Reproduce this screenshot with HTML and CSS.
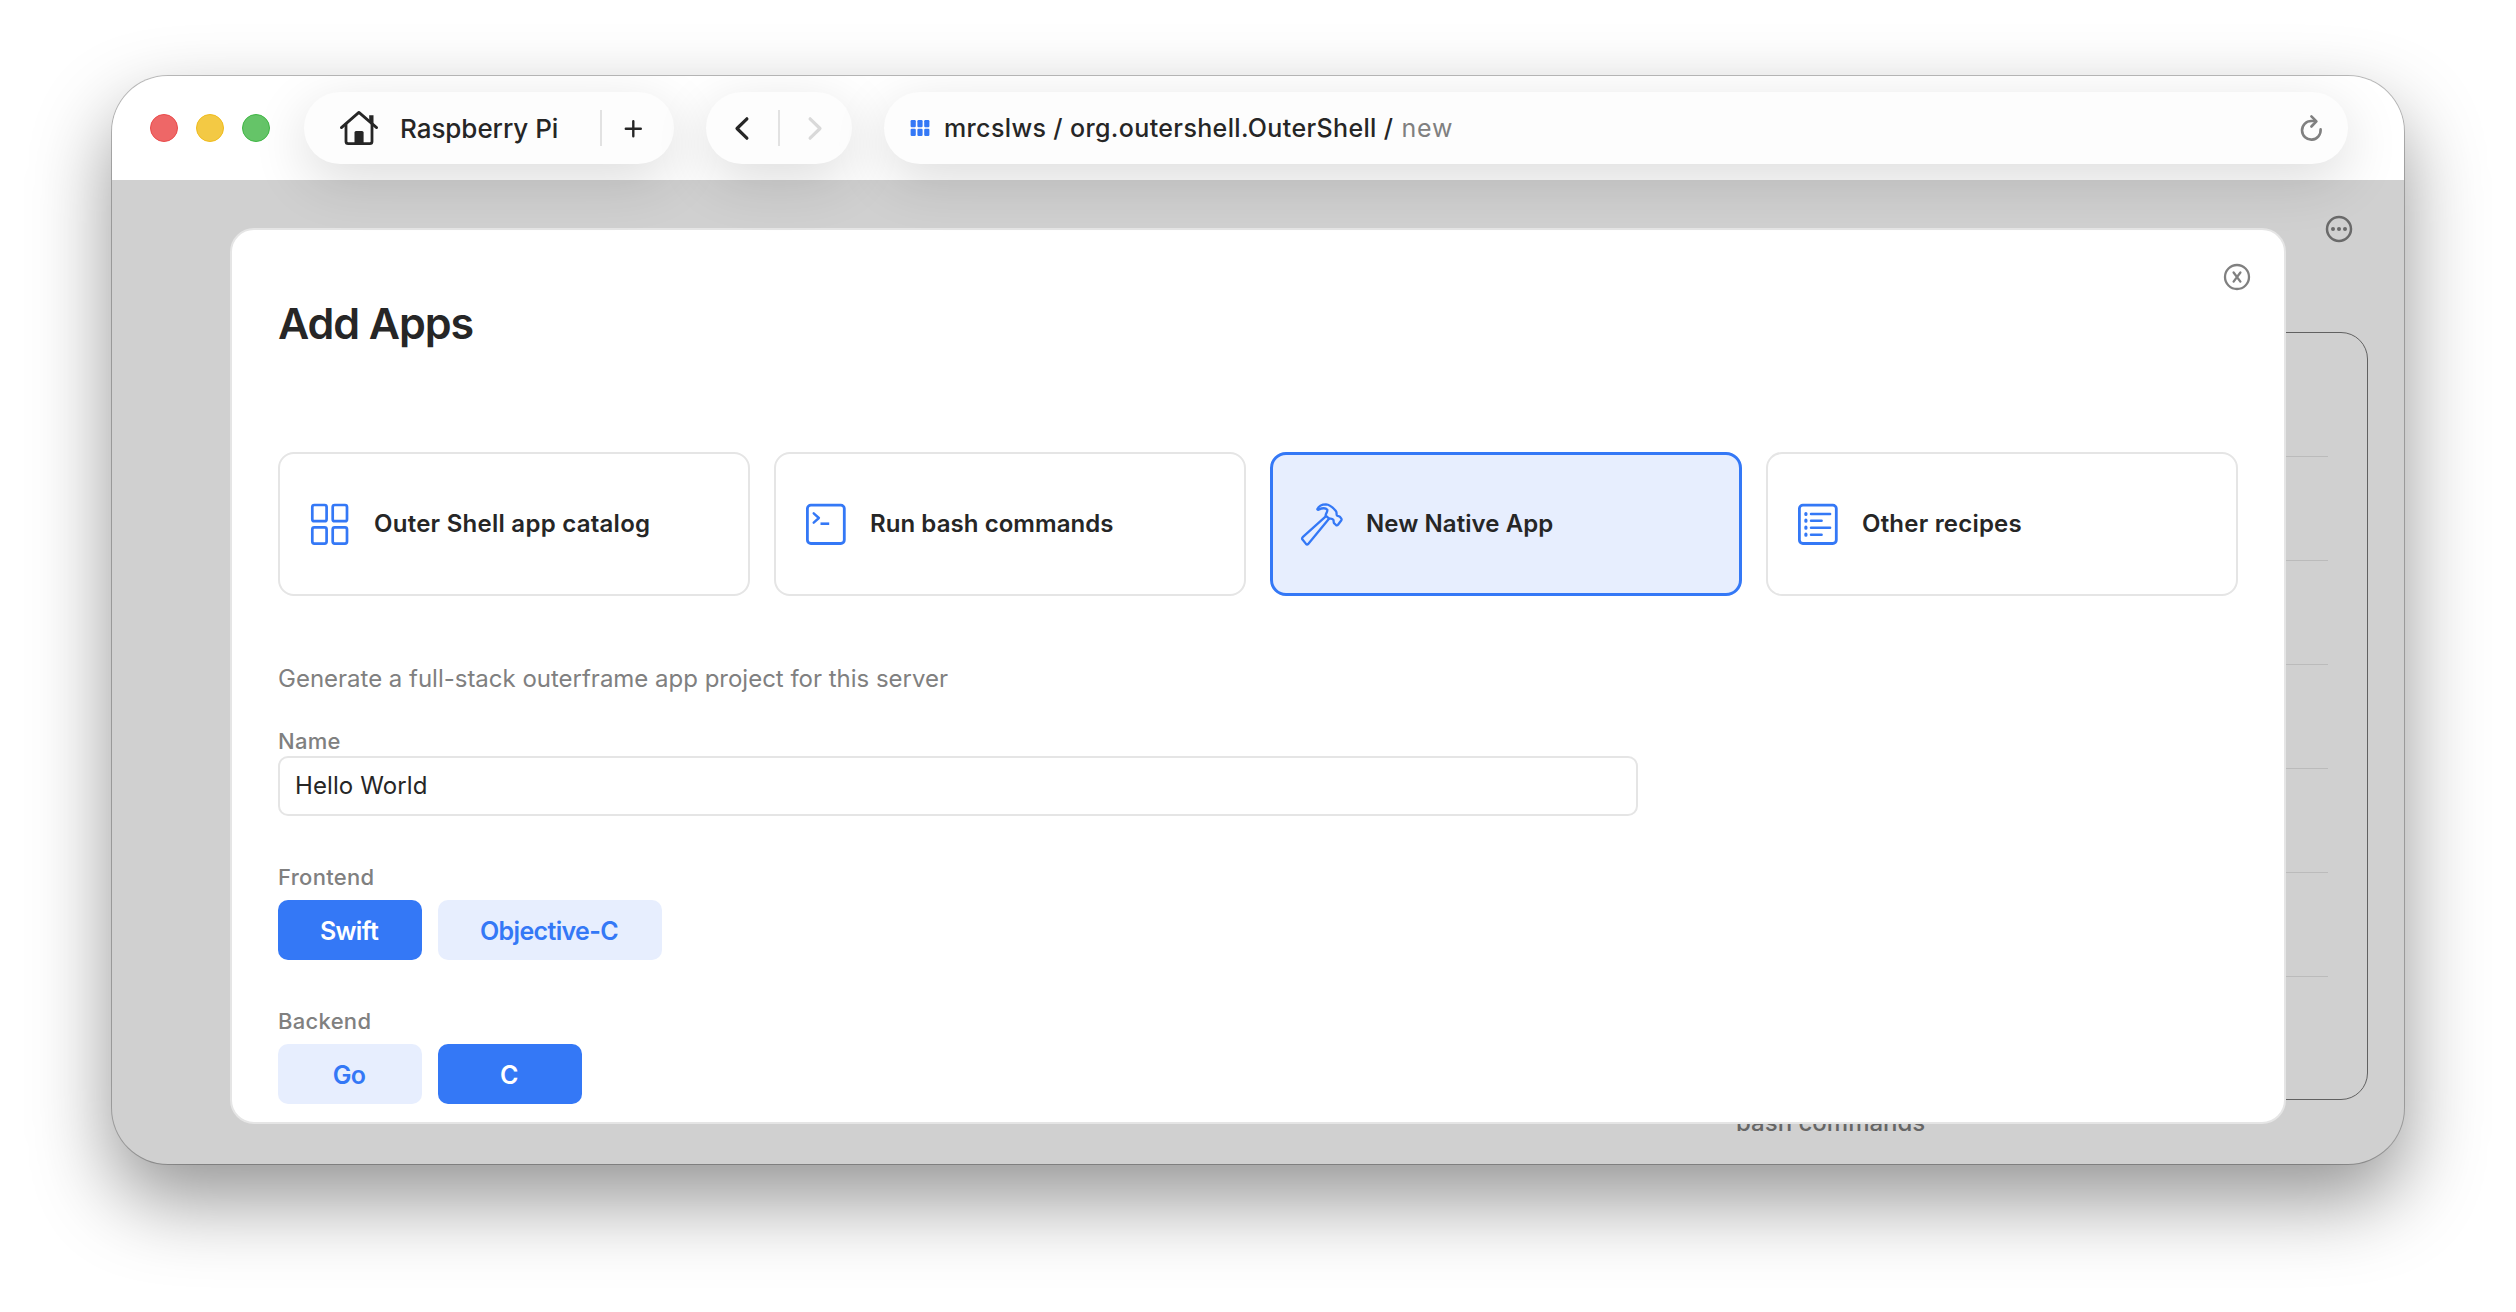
FILE: index.html
```html
<!DOCTYPE html>
<html lang="en">
<head>
<meta charset="utf-8">
<title>Add Apps</title>
<link rel="stylesheet" href="styles.css">
</head>
<body>
<div class="window">
  <header class="toolbar">
    <div class="lights"><span class="light light-red"></span><span class="light light-yellow"></span><span class="light light-green"></span></div>
    <div class="pill pill-server">
      <svg class="icon-home" width="40" height="36" viewBox="0 0 40 36" fill="none" stroke="currentColor" stroke-width="2.8" stroke-linecap="round" stroke-linejoin="round">
        <path d="M2.4 17.6 19.9 2.4 37.6 17.6"/>
        <path d="M7 14.5V31.5Q7 33.7 9.2 33.7H30.8Q33 33.7 33 31.5V14.5"/>
        <path d="M30.2 5.2h4.3v10.3l-4.3-3.700z" fill="currentColor" stroke="none"/>
        <path d="M15.5 34.5V22.500q0-1.500 1.500-1.500h6q1.600 0 1.600 1.500v12z" fill="currentColor" stroke="none"/>
      </svg>
      <span class="server-name">Raspberry Pi</span>
      <span class="divider"></span>
      <svg class="icon-plus" width="20" height="20" viewBox="0 0 20 20" fill="none" stroke="currentColor" stroke-width="2.4" stroke-linecap="round"><path d="M10.300 3.200v15M2.800 10.700h15"/></svg>
    </div>
    <div class="pill pill-nav">
      <svg width="20" height="28" viewBox="0 0 20 28" fill="none" stroke="#262626" stroke-width="3.2" stroke-linecap="round" stroke-linejoin="round"><path d="M14.900 4.800 5 14.500l9.900 9.700"/></svg>
      <span class="divider"></span>
      <svg width="20" height="28" viewBox="0 0 20 28" fill="none" stroke="#d9d9d9" stroke-width="3.2" stroke-linecap="round" stroke-linejoin="round"><path d="M5.100 4.800 15 14.500l-9.900 9.700"/></svg>
    </div>
    <div class="pill pill-url">
      <svg width="20" height="16" viewBox="0 0 20 16" fill="#3478f6">
        <rect x=".6" y="0" width="5.2" height="7.2" rx="1.2"/><rect x="7.4" y="0" width="5.2" height="7.2" rx="1.2"/><rect x="14.2" y="0" width="5.2" height="7.2" rx="1.2"/>
        <rect x=".6" y="8.8" width="5.2" height="7.2" rx="1.2"/><rect x="7.4" y="8.8" width="5.2" height="7.2" rx="1.2"/><rect x="14.2" y="8.8" width="5.2" height="7.2" rx="1.2"/>
      </svg>
      <span class="url">mrcslws / org.outershell.OuterShell /</span><span class="url-leaf">new</span>
      <svg class="icon-reload" width="30" height="30" viewBox="0 0 30 30" fill="none" stroke="#808080" stroke-width="2.6" stroke-linecap="round" stroke-linejoin="round"><path d="M23.600 16.400A9.300 9.300 0 1 1 14.300 8h4.200"/><path d="M14.400 3.300 19.400 8.300l-5 5.200"/></svg>
    </div>
  </header>

  <main class="stage">
    <svg class="icon-more" width="28" height="28" viewBox="0 0 28 28"><circle cx="14" cy="14" r="12" fill="none" stroke="#6a6a6a" stroke-width="2.5"/><g fill="#6a6a6a"><circle cx="8" cy="14" r="2"/><circle cx="14" cy="14" r="2"/><circle cx="20" cy="14" r="2"/></g></svg>
    <div class="panel">
      <div class="panel-row"></div><div class="panel-row"></div><div class="panel-row"></div>
      <div class="panel-row"></div><div class="panel-row"></div><div class="panel-row"></div>
    </div>
    <p class="panel-note">bash commands</p>

    <section class="modal">
      <svg class="icon-close" width="28" height="28" viewBox="0 0 28 28" fill="none" stroke="#808080" stroke-width="2.3" stroke-linecap="round"><circle cx="14" cy="14" r="12"/><path d="M10.600 9.500 17.400 18.600M17.400 9.500 10.600 18.600"/></svg>
      <h1 class="title">Add Apps</h1>
      <div class="cards">
        <div class="card">
          <svg width="44" height="44" viewBox="0 0 44 44" fill="none" stroke="#3478f6" stroke-width="2.7"><rect x="4.3" y="3" width="14.3" height="16.2" rx="2"/><rect x="24.7" y="3" width="14.3" height="16.2" rx="2"/><rect x="4.3" y="25.4" width="14.3" height="16.2" rx="2"/><rect x="24.7" y="25.4" width="14.3" height="16.2" rx="2"/></svg>
          <span class="card-label label-catalog">Outer Shell app catalog</span>
        </div>
        <div class="card">
          <svg width="44" height="44" viewBox="0 0 44 44" fill="none" stroke="#3478f6" stroke-width="2.8"><rect x="3.4" y="3.1" width="36.9" height="38.4" rx="3.5"/><path d="M9.700 11.300 14.900 16l-5.200 4.700" stroke-width="2.4" stroke-linecap="round" stroke-linejoin="round"/><path d="M16.500 21.700h8.700" stroke-width="2.6"/></svg>
          <span class="card-label">Run bash commands</span>
        </div>
        <div class="card card-selected">
          <svg width="44" height="44" viewBox="0 0 44 44" fill="none" stroke="#3478f6" stroke-width="2.3" stroke-linejoin="round" stroke-linecap="round">
            <path d="M17.300 7.200C18.800 3.600 22 2.300 26 2.300C30.500 2.400 33 5.800 36 9.200C37 10.400 36.200 11.500 36.800 13.200C37.500 14.600 39 13.900 40 14.900L41.300 16.700Q41.900 17.500 41.200 18.500L38 22.700Q37 23.800 36 23L34 21.200C33.300 20.300 34 19 33.300 17.700C31.800 16 30.400 17.100 28.900 16.300L25.700 13.600C25.300 12 27.800 10 27.300 7.700C25.500 5.600 21.500 6.300 18.500 7.600Q17.500 8 17.300 7.200Z"/>
            <path d="M25.500 14.700 2.700 35.200Q1.600 36.400 2.500 37.500L6 41.900Q7 43 8.200 42L29 16.800"/>
          </svg>
          <span class="card-label">New Native App</span>
        </div>
        <div class="card">
          <svg width="44" height="44" viewBox="0 0 44 44" fill="none" stroke="#3478f6" stroke-width="2.8"><rect x="3.4" y="3.1" width="36.9" height="38.4" rx="3.5"/>
            <path d="M15 12h19.100M15 18.700h10.600M15 25.700h19.100M15 32.700h10.600" stroke-width="2.5" stroke-linecap="round"/>
            <path d="M9.900 11.500v1M9.900 18.200v1M9.900 25.200v1M9.900 32.200v1" stroke-width="3.2" stroke-linecap="round"/></svg>
          <span class="card-label label-other">Other recipes</span>
        </div>
      </div>
      <p class="description">Generate a full-stack outerframe app project for this server</p>
      <div class="field-label">Name</div>
      <div class="text-field">Hello World</div>
      <div class="field-label field-label-options">Frontend</div>
      <div class="options"><button class="option option-on">Swift</button><button class="option option-wide">Objective-C</button></div>
      <div class="field-label field-label-options">Backend</div>
      <div class="options"><button class="option">Go</button><button class="option option-on">C</button></div>
    </section>
  </main>
</div>
</body>
</html>
```
FILE: styles.css
```css
* { box-sizing: border-box; }
body {
  margin: 0;
  height: 1312px;
  padding: 76px 112px 148px;
  background: #fff;
  color: #262626;
  font-family: Inter, "Liberation Sans", sans-serif;
  overflow: hidden;
}
h1, p { margin: 0; }
svg { display: block; flex: none; }

.window {
  display: flex;
  flex-direction: column;
  height: 1088px;
  border-radius: 56px;
  overflow: hidden;
  background: #d0d0d0;
  box-shadow: 0 0 0 1px rgba(0, 0, 0, .24), 0 36px 80px rgba(0, 0, 0, .42);
}

/* Toolbar */
.toolbar {
  position: relative;
  z-index: 2;
  display: flex;
  align-items: center;
  height: 104px;
  padding: 0 56px 0 38px;
  background: #fff;
}
.lights { display: flex; gap: 18px; margin-right: 34px; }
.light { width: 28px; height: 28px; border-radius: 50%; border: 1px solid; }
.light-red { background: #ee6767; border-color: #e94a4a; }
.light-yellow { background: #f3c944; border-color: #efbb1c; }
.light-green { background: #65c468; border-color: #3fb644; }
.pill {
  display: flex;
  align-items: center;
  height: 72px;
  border-radius: 36px;
  background: #fdfdfd;
  box-shadow: 0 16px 56px rgba(0, 0, 0, .14);
}
.divider { width: 2px; height: 36px; background: #e2e2e2; }
.pill-server { width: 370px; padding: 0 31px 0 35px; margin-right: 32px; }
.server-name { flex: 1; margin-left: 21px; padding-top: 1px; font-size: 26px; font-weight: 500; letter-spacing: -.05px; }
.icon-plus { margin-left: 21px; }
.pill-nav { width: 146px; justify-content: space-between; padding: 0 27px 0 26px; margin-right: 32px; }
.pill-url { flex: 1; padding: 0 21px 0 26px; font-size: 25px; }
.url { margin-left: 14px; font-weight: 500; letter-spacing: .364px; white-space: nowrap; }
.url-leaf { margin-left: 8px; color: #808080; letter-spacing: .8px; }
.icon-reload { margin-left: auto; }

/* Dimmed page below the dialog */
.stage { position: relative; flex: 1; padding: 35px 36px 0 188px; }
.icon-more { margin: 0 15px 0 auto; }
.panel {
  height: 768px;
  margin-top: 89px;
  padding: 20px 39px 0;
  border: 1px solid #616161;
  border-radius: 27px;
}
.panel-row { height: 104px; border-bottom: 1px solid #bbb; }
.panel-note { margin: 8px 0 0 1436px; font-size: 24px; line-height: 30px; font-weight: 500; color: #666; }

/* Dialog */
.modal {
  position: absolute;
  left: 118px;
  top: 48px;
  width: 2056px;
  height: 896px;
  padding: 67px 46px 0;
  border: 2px solid #e5e5e5;
  border-radius: 24px;
  background: #fff;
}
.icon-close { position: absolute; right: 33px; top: 33px; }
.title { margin-bottom: 103px; font-size: 43px; line-height: 52px; font-weight: 600; letter-spacing: -1.1px; }
.cards { display: grid; grid-template-columns: repeat(4, 1fr); gap: 24px; }
.card {
  display: flex;
  align-items: center;
  gap: 22px;
  height: 144px;
  padding-left: 28px;
  border: 2px solid #e5e5e5;
  border-radius: 16px;
}
.card-selected { padding-left: 27px; border: 3px solid #3478f6; background: #e7eefe; }
.card-label { padding-bottom: 2px; font-size: 24px; font-weight: 600; letter-spacing: .07px; }
.label-catalog { letter-spacing: .26px; }
.label-other { letter-spacing: .2px; }
.description { margin: 68px 0 33px; font-size: 24px; line-height: 30px; color: #808080; letter-spacing: -.01px; }
.field-label { font-size: 22px; line-height: 28px; font-weight: 500; letter-spacing: .3px; color: #808080; }
.field-label-options { margin: 47px 0 9px; }
.text-field {
  display: flex;
  align-items: center;
  width: 1360px;
  height: 60px;
  margin-top: 1px;
  padding: 0 15px 2px;
  border: 2px solid #e5e5e5;
  border-radius: 10px;
  font-size: 24px;
  letter-spacing: .1px;
}
.options { display: flex; gap: 16px; }
.option {
  width: 144px;
  height: 60px;
  padding: 2px 2px 0 0;
  border: 0;
  border-radius: 10px;
  background: #e7eefe;
  color: #3478f6;
  font: 600 25px/30px Inter, "Liberation Sans", sans-serif;
  letter-spacing: -.64px;
}
.option-wide { width: 224px; }
.option-on { background: #3478f6; color: #fff; }
```
